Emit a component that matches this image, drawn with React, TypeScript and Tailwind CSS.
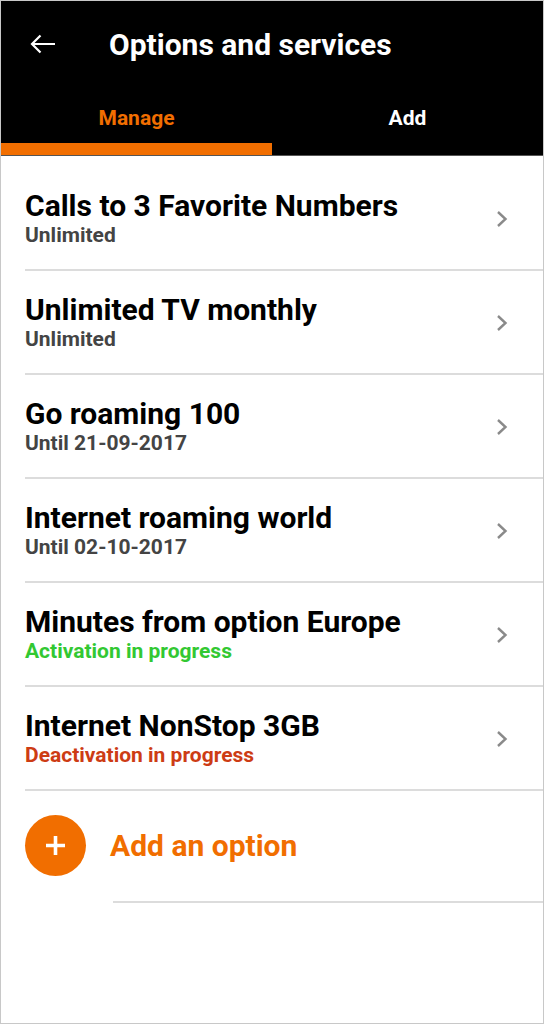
import React from "react";

type Option = {
  title: string;
  status: string;
  tone: "gray" | "green" | "red";
};

const options: Option[] = [
  { title: "Calls to 3 Favorite Numbers", status: "Unlimited", tone: "gray" },
  { title: "Unlimited TV monthly", status: "Unlimited", tone: "gray" },
  { title: "Go roaming 100", status: "Until 21-09-2017", tone: "gray" },
  { title: "Internet roaming world", status: "Until 02-10-2017", tone: "gray" },
  { title: "Minutes from option Europe", status: "Activation in progress", tone: "green" },
  { title: "Internet NonStop 3GB", status: "Deactivation in progress", tone: "red" },
];

const toneClass = {
  gray: "text-[#444444]",
  green: "text-[#32c832]",
  red: "text-[#cd3c14]",
};

const Chevron = () => (
  <svg width="12" height="18" viewBox="0 0 12 18" className="mt-0.5">
    <polyline points="2,2 9.5,9 2,16" fill="none" stroke="#8a8a8a" strokeWidth="2.4" />
  </svg>
);

const OptionRow = ({ item }: { item: Option }) => (
  <div className="ml-6 flex items-center border-b-2 border-[#dcdcdc] pt-[22px] pb-[22px]">
    <div className="flex-1">
      <div className="text-[30px] leading-[34px] font-bold text-black">{item.title}</div>
      <div className={`text-[21px] leading-[24px] font-bold ${toneClass[item.tone]}`}>{item.status}</div>
    </div>
    <div className="mr-[35px]">
      <Chevron />
    </div>
  </div>
);

export default function App() {
  return (
    <div
      className="w-[544px] h-[1024px] border border-[#c8c8c8] bg-white overflow-hidden"
      style={{ fontFamily: "Roboto, 'Liberation Sans', sans-serif" }}
    >
      {/* header */}
      <div className="bg-black">
        <div className="h-[86px] flex items-center">
          <button className="ml-[29px] w-[26px] flex items-center">
            <svg width="26" height="20" viewBox="0 0 26 20">
              <path d="M2 10 H25 M10.5 1.5 L2 10 L10.5 18.5" fill="none" stroke="white" strokeWidth="2.2" />
            </svg>
          </button>
          <h1 className="ml-[53px] text-[30px] font-bold text-white">Options and services</h1>
        </div>
        <div className="flex">
          <div className="flex-1 flex flex-col">
            <div className="h-[56px] pt-2 flex items-center justify-center text-[21px] font-bold text-[#f16e00]">
              Manage
            </div>
            <div className="h-[12px] bg-[#f16e00]" />
          </div>
          <div className="flex-1 flex flex-col">
            <div className="h-[56px] pt-2 flex items-center justify-center text-[21px] font-bold text-white">
              Add
            </div>
            <div className="h-[12px]" />
          </div>
        </div>
        <div className="h-px bg-[#555555]" />
      </div>

      {/* list */}
      <div className="pt-[11px]">
        {options.map((item) => (
          <OptionRow key={item.title} item={item} />
        ))}
      </div>

      {/* add option */}
      <div className="ml-6 pt-[24px] flex items-center">
        <div className="w-[61px] h-[61px] rounded-full bg-[#f16e00] flex items-center justify-center">
          <svg width="21" height="21" viewBox="0 0 21 21">
            <path d="M10.5 1 V20 M1 10.5 H20" stroke="white" strokeWidth="3.6" />
          </svg>
        </div>
        <span className="ml-[24px] text-[30px] font-bold text-[#f16e00]">Add an option</span>
      </div>
      <div className="ml-[112px] mt-[25px] h-[2px] bg-[#dcdcdc]" />
    </div>
  );
}
